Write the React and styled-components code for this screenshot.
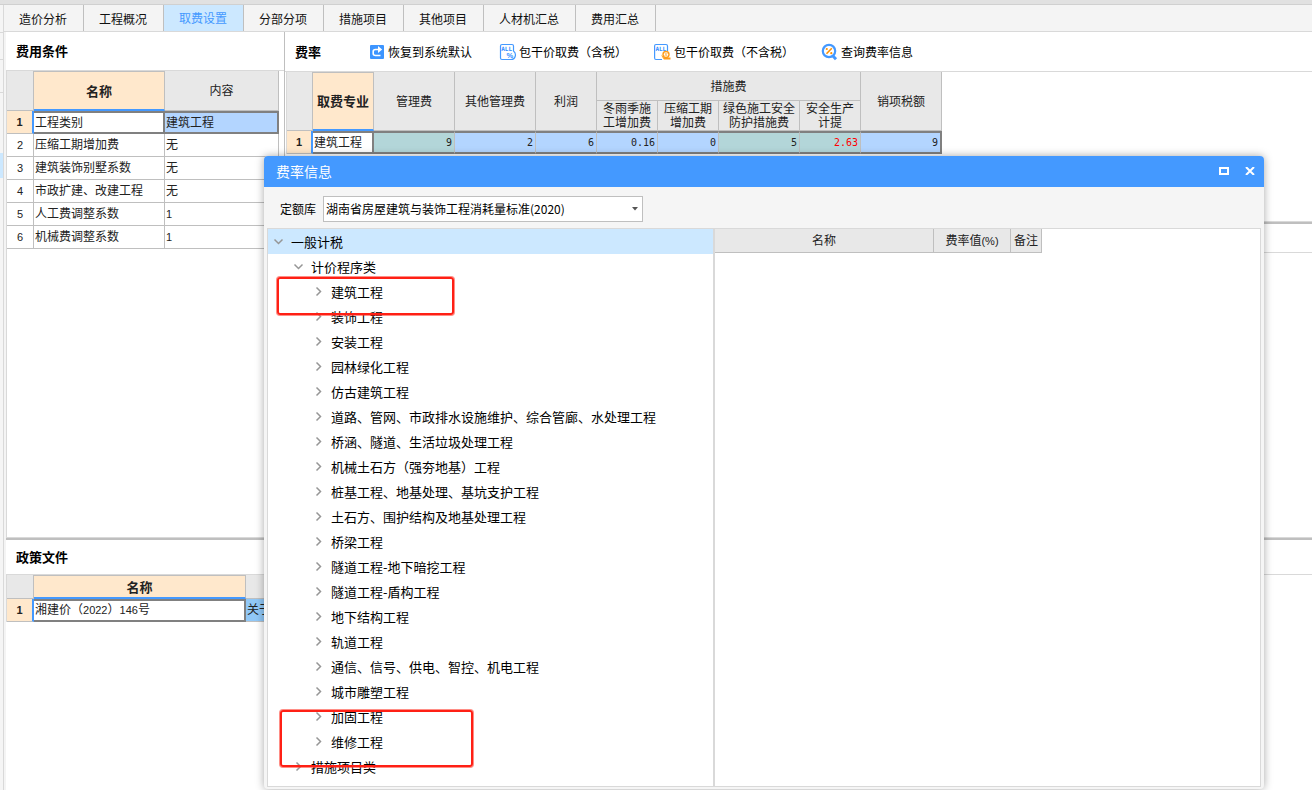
import React from "react";
import styled, { createGlobalStyle, css } from "styled-components";

const cjk = `"Noto Sans CJK SC", sans-serif`;
const c = {
  line: "#bfbfbf",
  soft: "#d9d9d9",
  head: "#e8e8e8",
  bar: "#f5f5f5",
  accent: "#4499ff",
  orange: "#ffe8cc",
  pick: "#b3d5ff",
  teal: "#b3d6d9",
  sky: "#cce8ff",
};

const Global = createGlobalStyle`
  *, *::before, *::after { box-sizing: border-box; }
  body { margin: 0; background: #fff; color: #000; font: 12px/16px ${cjk}; }
  button, select { font: inherit; color: inherit; }
  h1, h2, ul { margin: 0; padding: 0; font-weight: inherit; }
`;

const Page = styled.div`
  position: relative;
  min-height: 100vh;
  display: flex;
  flex-direction: column;
  overflow: hidden;
`;
const TopEdge = styled.div`
  height: 5px;
  background: #e1e1e1;
  border-bottom: 1px solid #d0d0d0;
`;
const Shell = styled.div`
  flex: 1;
  display: flex;
`;
const Rail = styled.div`
  width: 4px;
  background: #f5f5f5;
  border-right: 1px solid ${c.soft};
`;
const RailItem = styled.div`
  height: ${(p) => p.$h}px;
  background: ${(p) => (p.$on ? c.sky : "transparent")};
  border-bottom: 1px solid ${(p) => (p.$line ? c.soft : "transparent")};
`;
const Work = styled.div`
  flex: 1;
  min-width: 0;
  display: flex;
  flex-direction: column;
`;
const Tabs = styled.nav`
  display: flex;
  height: 27px;
  background: #f4f4f4;
  border-bottom: 1px solid ${c.soft};
`;
const Tab = styled.button`
  padding: ${(p) => (p.$on ? 0 : 2)}px 16px 0 15px;
  border: 0;
  border-right: 1px solid ${c.line};
  background: ${(p) => (p.$on ? c.sky : "transparent")};
  color: ${(p) => (p.$on ? c.accent : "#111")};
`;
const Stack = styled.div`
  flex: 1;
  display: flex;
  flex-direction: column;
  padding-left: 2px;
  background: linear-gradient(to right, #f4f4f4 2px, #fff 2px);
`;
const Upper = styled.div`
  flex: 1;
  display: flex;
`;
const Conditions = styled.section`
  width: 279px;
  border-right: 1px solid ${c.line};
  display: flex;
  flex-direction: column;
`;
const Rates = styled.section`
  flex: 1;
  min-width: 0;
`;
const RateArea = styled.div`
  height: 189px;
`;
const RateFoot = styled.div`
  height: 29px;
  border-bottom: 1px solid ${c.soft};
`;
const Splitter = styled.div`
  height: 3px;
  background: ${c.line};
  border-top: 1px solid ${c.soft};
`;
const Policies = styled.section`
  height: 250px;
`;
const PanelHead = styled.header`
  height: ${(p) => p.$h}px;
  display: flex;
  align-items: center;
  padding-left: 10px;
  border-bottom: 1px solid ${c.soft};
`;
const PanelTitle = styled.h2`
  font-size: 13px;
  font-weight: 700;
`;
const Tools = styled.div`
  display: flex;
  gap: 27px;
  margin-left: 47px;
`;
const Tool = styled.button`
  display: flex;
  align-items: center;
  gap: 2px;
  padding: 0;
  border: 0;
  background: none;
  white-space: nowrap;
  svg { flex: none; }
`;

const TableBox = styled.div`
  flex: 1;
  margin-left: ${(p) => (p.$gap ? "1px" : "0")};
  border-left: 1px solid ${c.soft};
  overflow: hidden;
`;
const Grid = styled.table`
  table-layout: fixed;
  width: ${(p) => p.$w}px;
  border-collapse: separate;
  border-spacing: 0;
  color: #222;
`;
const cell = css`
  padding: 0 2px 1px;
  border: 0 solid ${c.line};
  border-width: 0 1px 1px 0;
  line-height: 14px;
`;
const Th = styled.th`
  ${cell}
  height: ${(p) => p.$h}px;
  background: ${c.head};
  font-weight: 400;
  ${(p) =>
    p.$on &&
    css`
      background: ${c.orange};
      font-size: 13px;
      font-weight: 700;
      padding: 0;
      border-top-width: 1px;
      border-bottom: 2px solid ${c.accent};
    `}
`;
const RowNo = styled.th`
  ${cell}
  height: 23px;
  font: 11px/14px "Liberation Sans", sans-serif;
  background: #fff;
  ${(p) =>
    p.$on &&
    css`
      background: ${c.orange};
      font-weight: 700;
      border-right: 2px solid ${c.accent};
    `}
`;
const Td = styled.td`
  ${cell}
  padding: 0 2px 2px 1px;
  white-space: nowrap;
  overflow: hidden;
  text-align: ${(p) => (p.$num ? "right" : "left")};
  color: ${(p) => (p.$red ? "#f00" : "inherit")};
  background: ${(p) => p.$bg || "#fff"};
  ${(p) =>
    p.$band &&
    css`
      border-top: 2px solid #808080;
      border-bottom: 2px solid #808080;
    `}
  ${(p) => p.$end && css`border-right: 2px solid #808080;`}
`;
const Digits = styled.span`
  font: 11px/14px "Liberation Sans", sans-serif;
`;
const Mono = styled.span`
  font: 10px/14px "DejaVu Sans Mono", monospace;
`;

const Dialog = styled.div`
  position: absolute;
  top: 156px;
  left: 264px;
  right: 48px;
  background: ${c.bar};
  border-radius: 4px;
  box-shadow: 0 0 9px rgba(0, 0, 0, 0.35);
`;
const TitleBar = styled.header`
  height: 31px;
  display: flex;
  align-items: center;
  padding: 0 1px 0 12px;
  border-radius: 4px 4px 0 0;
  background: ${c.accent};
  color: #fff;
`;
const DialogTitle = styled.h1`
  flex: 1;
  padding-bottom: 2px;
  font-size: 14px;
`;
const WinButton = styled.button`
  width: 26px;
  height: 24px;
  display: grid;
  place-items: center;
  padding: 0 0 2px;
  border: 0;
  background: none;
`;
const Filter = styled.div`
  height: 41px;
  display: flex;
  align-items: center;
  gap: 7px;
  padding: 3px 16px 0;
`;
const SelectBox = styled.div`
  display: grid;
  width: 320px;
  align-items: center;
  & > * { grid-area: 1 / 1; }
  & > svg { justify-self: end; margin-right: 5px; pointer-events: none; }
`;
const Select = styled.select`
  appearance: none;
  height: 26px;
  width: 100%;
  padding: 0 16px 0 2px;
  border: 1px solid ${c.line};
  border-radius: 0;
  background: #fff;
`;
const DialogBody = styled.div`
  display: flex;
  margin: 0 3px;
  border: 1px solid ${c.soft};
  background: #fff;
`;
const DialogFoot = styled.div`
  height: 2px;
`;
const TreePane = styled.div`
  position: relative;
  flex: 0 0 447px;
  padding-bottom: 7px;
  border-right: 2px solid ${c.soft};
`;
const Tree = styled.ul`
  list-style: none;
`;
const Node = styled.button`
  display: flex;
  align-items: center;
  gap: 7px;
  width: 100%;
  height: 25px;
  padding: 0 0 0 ${(p) => 4 + p.$level * 20}px;
  border: 0;
  background: ${(p) => (p.$on ? c.sky : "transparent")};
  font-size: 13px;
  text-align: left;
  white-space: nowrap;
`;
const Mark = styled.div`
  position: absolute;
  left: ${(p) => p.$x}px;
  top: ${(p) => p.$y}px;
  width: ${(p) => p.$w}px;
  height: ${(p) => p.$h}px;
  border: 2px solid #ff2015;
  border-radius: 3px;
  box-shadow: 0 0 0 1px rgba(255, 50, 35, 0.55);
  pointer-events: none;
`;

const Chevron = ({ open }) => (
  <svg width="12" height="12" viewBox="0 0 12 12" fill="none" stroke="#969696" strokeWidth="1.5">
    <path d={open ? "M2.500 3.500 L6.500 7.500 L10.500 3.500" : "M4.500 1.500 L8.500 5.500 L4.500 9.500"} />
  </svg>
);
const ResetIcon = () => (
  <svg width="18" height="18" viewBox="0 0 18 18">
    <rect x="2" y="2" width="14" height="14" rx="1" fill="#3d95ff" />
    <path d="M11 6.5 H7.5 Q5.2 6.5 5.2 8.5 V10.5 Q5.2 12.5 7.5 12.5 H12.5" fill="none" stroke="#fff" strokeWidth="1.6" />
    <path d="M10 3 L14.200 6.5 L10 10 Z" fill="#fff" />
  </svg>
);
const AllLabel = () => (
  <text x="2.2" y="8" fontSize="6" fontWeight="700" fontFamily="DejaVu Sans Mono, monospace" fill="#2f8dff">ALL</text>
);
const AllTaxIcon = () => (
  <svg width="18" height="18" viewBox="0 0 18 18">
    <path d="M3 1.5 H13 Q14.500 1.500 14.500 3 V8 Q17 10 16.300 13 Q15.500 16.500 12 16.500 H3 Q1.500 16.500 1.500 15 V3 Q1.500 1.500 3 1.500 Z" fill="#fff" stroke="#4499ff" strokeWidth="1.2" />
    <AllLabel />
    <text x="7.500" y="15" fontSize="7.5" fontWeight="700" fontFamily="Liberation Sans, sans-serif" fill="#2f8dff">%</text>
  </svg>
);
const AllNoTaxIcon = () => (
  <svg width="18" height="18" viewBox="0 0 18 18">
    <path d="M13.500 8 V3 Q13.500 1.500 12 1.500 H2 Q0.600 1.500 0.600 3 V15 Q0.600 16.500 2 16.500 H8" fill="none" stroke="#4499ff" strokeWidth="1.2" />
    <g transform="translate(-0.800 0)"><AllLabel /></g>
    <circle cx="12" cy="11.500" r="3" fill="#fff" stroke="#ff9c1a" strokeWidth="1.400" />
    <path d="M10.800 12.800 L13.200 10.200 M10.800 10.600 H11.600 M12.400 12.600 H13.200" stroke="#ff9c1a" />
    <path d="M7 11.500 L9.800 14.500 H16.500 V16.600 H10 Q8 14.500 7 11.500 Z" fill="#ff9c1a" />
  </svg>
);
const QueryIcon = () => (
  <svg width="18" height="18" viewBox="0 0 18 18" fill="none">
    <circle cx="8" cy="8" r="6.200" stroke="#4499ff" strokeWidth="2.200" />
    <path d="M11.500 12.500 L15 16.200" stroke="#4499ff" strokeWidth="3" />
    <path d="M5.500 10.800 L10.800 5.200" stroke="#ff9100" strokeWidth="1.600" />
    <circle cx="5.800" cy="6" r="1.100" fill="#ff9100" />
    <circle cx="10.300" cy="10.200" r="1.100" fill="#ff9100" />
  </svg>
);

const tabs = ["造价分析", "工程概况", "取费设置", "分部分项", "措施项目", "其他项目", "人材机汇总", "费用汇总"];
const conditions = [
  ["工程类别", "建筑工程"],
  ["压缩工期增加费", "无"],
  ["建筑装饰别墅系数", "无"],
  ["市政扩建、改建工程", "无"],
  ["人工费调整系数", "1"],
  ["机械费调整系数", "1"],
];
const rateValues = [
  ["9", c.teal], ["2", c.pick], ["6", c.pick], ["0.16", c.pick],
  ["0", c.pick], ["5", c.teal], ["2.63", c.teal], ["9", c.pick],
];
const leaves = [
  "建筑工程", "装饰工程", "安装工程", "园林绿化工程", "仿古建筑工程",
  "道路、管网、市政排水设施维护、综合管廊、水处理工程",
  "桥涵、隧道、生活垃圾处理工程", "机械土石方（强夯地基）工程",
  "桩基工程、地基处理、基坑支护工程", "土石方、围护结构及地基处理工程",
  "桥梁工程", "隧道工程-地下暗挖工程", "隧道工程-盾构工程", "地下结构工程",
  "轨道工程", "通信、信号、供电、智控、机电工程", "城市雕塑工程", "加固工程", "维修工程",
];
const tree = [
  { level: 0, open: true, text: "一般计税" },
  { level: 1, open: true, text: "计价程序类" },
  ...leaves.map((text) => ({ level: 2, text })),
  { level: 1, text: "措施项目类" },
];

const Cols = ({ widths }) => (
  <colgroup>{widths.map((w, i) => <col key={i} width={w} />)}</colgroup>
);

function ConditionTable() {
  return (
    <Grid $w={272}>
      <Cols widths={[27, 131, 114]} />
      <thead>
        <tr><Th $h={40} /><Th $on>名称</Th><Th>内容</Th></tr>
      </thead>
      <tbody>
        {conditions.map(([name, value], i) => (
          <tr key={name}>
            <RowNo $on={i === 0}>{i + 1}</RowNo>
            <Td $band={i === 0} $end={i === 0}>{name}</Td>
            <Td $band={i === 0} $end={i === 0} $bg={i === 0 ? c.pick : undefined}>
              {value === "1" ? <Digits>{value}</Digits> : value}
            </Td>
          </tr>
        ))}
      </tbody>
    </Grid>
  );
}

function RateTable() {
  return (
    <Grid $w={655}>
      <Cols widths={[26, 61, 81, 81, 61, 61, 61, 81, 61, 81]} />
      <thead>
        <tr>
          <Th rowSpan={2} $h={59} />
          <Th rowSpan={2} $on>取费专业</Th>
          <Th rowSpan={2}>管理费</Th>
          <Th rowSpan={2}>其他管理费</Th>
          <Th rowSpan={2}>利润</Th>
          <Th colSpan={4} $h={29}>措施费</Th>
          <Th rowSpan={2}>销项税额</Th>
        </tr>
        <tr>
          <Th $h={30}>冬雨季施<br />工增加费</Th>
          <Th>压缩工期<br />增加费</Th>
          <Th>绿色施工安全<br />防护措施费</Th>
          <Th>安全生产<br />计提</Th>
        </tr>
      </thead>
      <tbody>
        <tr>
          <RowNo $on>1</RowNo>
          <Td $band $end>建筑工程</Td>
          {rateValues.map(([value, bg], i) => (
            <Td key={i} $num $band $bg={bg} $red={value === "2.63"} $end={i === 7}><Mono>{value}</Mono></Td>
          ))}
        </tr>
      </tbody>
    </Grid>
  );
}

function PolicyTable() {
  return (
    <Grid $w={839}>
      <Cols widths={[27, 212, 600]} />
      <thead>
        <tr><Th $h={24} /><Th $on>名称</Th><Th /></tr>
      </thead>
      <tbody>
        <tr>
          <RowNo $on>1</RowNo>
          <Td $band $end>湘建价（<Digits>2022</Digits>）<Digits>146</Digits>号</Td>
          <Td $bg="#91c8f7">关于</Td>
        </tr>
      </tbody>
    </Grid>
  );
}

function RateDialog() {
  return (
    <Dialog role="dialog" aria-labelledby="dialog-title">
      <TitleBar>
        <DialogTitle id="dialog-title">费率信息</DialogTitle>
        <WinButton aria-label="最大化">
          <svg width="10" height="8" viewBox="0 0 10 8"><rect x="1" y="1" width="8" height="6" fill="none" stroke="#fff" strokeWidth="2" /></svg>
        </WinButton>
        <WinButton aria-label="关闭">
          <svg width="10" height="8" viewBox="0 0 10 8"><path d="M1 0 L9 8 M9 0 L1 8" stroke="#fff" strokeWidth="2" /></svg>
        </WinButton>
      </TitleBar>
      <Filter>
        <label htmlFor="library">定额库</label>
        <SelectBox>
          <Select id="library" defaultValue="hn">
            <option value="hn">湖南省房屋建筑与装饰工程消耗量标准(2020)</option>
          </Select>
          <svg width="6" height="4" viewBox="0 0 6 4"><path d="M0 0 H6 L3 3.500 Z" fill="#555" /></svg>
        </SelectBox>
      </Filter>
      <DialogBody>
        <TreePane>
          <Tree>
            {tree.map((n, i) => (
              <li key={n.text}>
                <Node $level={n.level} $on={i === 0}><Chevron open={n.open} />{n.text}</Node>
              </li>
            ))}
          </Tree>
          <Mark $x={9} $y={48} $w={177} $h={38} />
          <Mark $x={12} $y={481} $w={193} $h={57} />
        </TreePane>
        <div>
          <Grid $w={327}>
            <Cols widths={[219, 77, 31]} />
            <thead>
              <tr><Th $h={24}>名称</Th><Th>费率值<Digits>(%)</Digits></Th><Th>备注</Th></tr>
            </thead>
          </Grid>
        </div>
      </DialogBody>
      <DialogFoot />
    </Dialog>
  );
}

export default function App() {
  return (
    <Page>
      <Global />
      <TopEdge />
      <Shell>
        <Rail>
          <RailItem $h={28} $line />
          <RailItem $h={27} $line />
          <RailItem $h={33} $line />
          <RailItem $h={60} />
          <RailItem $h={25} $on />
        </Rail>
        <Work>
          <Tabs>
            {tabs.map((t) => <Tab key={t} $on={t === "取费设置"}>{t}</Tab>)}
          </Tabs>
          <Stack>
            <Upper>
              <Conditions>
                <PanelHead $h={39}><PanelTitle>费用条件</PanelTitle></PanelHead>
                <TableBox><ConditionTable /></TableBox>
              </Conditions>
              <Rates>
                <RateArea>
                  <PanelHead $h={40}>
                    <PanelTitle>费率</PanelTitle>
                    <Tools>
                      <Tool><ResetIcon />恢复到系统默认</Tool>
                      <Tool><AllTaxIcon />包干价取费（含税）</Tool>
                      <Tool><AllNoTaxIcon />包干价取费（不含税）</Tool>
                      <Tool><QueryIcon />查询费率信息</Tool>
                    </Tools>
                  </PanelHead>
                  <TableBox $gap><RateTable /></TableBox>
                </RateArea>
                <Splitter />
                <RateFoot />
              </Rates>
            </Upper>
            <Splitter />
            <Policies>
              <PanelHead $h={35}><PanelTitle>政策文件</PanelTitle></PanelHead>
              <TableBox><PolicyTable /></TableBox>
            </Policies>
          </Stack>
        </Work>
      </Shell>
      <RateDialog />
    </Page>
  );
}
